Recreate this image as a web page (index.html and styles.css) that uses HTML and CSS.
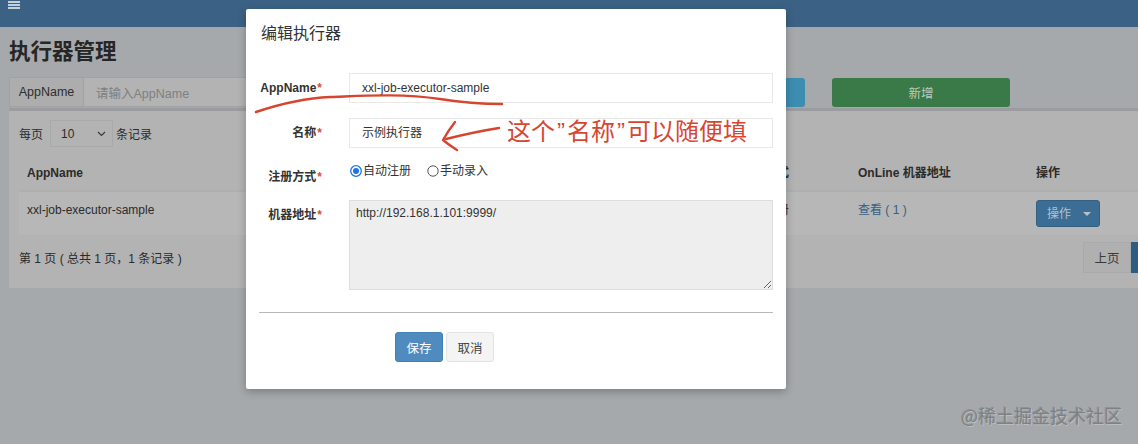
FILE: index.html
```html
<!DOCTYPE html>
<html lang="zh-CN">
<head>
<meta charset="utf-8">
<title>执行器管理</title>
<link rel="stylesheet" href="styles.css">
</head>
<body>
<header class="topbar">
  <span class="burger"><i></i><i></i><i></i></span>
</header>
<main class="content">
  <h1 class="page-title">执行器管理</h1>
  <div class="search-row">
    <div class="input-group">
      <span class="addon">AppName</span>
      <span class="search-input">请输入AppName</span>
    </div>
    <button class="btn btn-search">搜索</button>
    <button class="btn btn-add">新增</button>
  </div>
  <section class="box">
    <div class="length">
      <span>每页</span>
      <span class="select">10
        <svg class="chev" width="9" height="6" viewBox="0 0 9 6"><path d="M1 1l3.5 3.5L8 1" fill="none" stroke="#3a3a3a" stroke-width="1.2"/></svg>
      </span>
      <span>条记录</span>
    </div>
    <table class="grid">
      <colgroup>
        <col style="width:482px"><col style="width:120px"><col style="width:112px"><col style="width:117px"><col style="width:178px"><col style="width:151px">
      </colgroup>
      <thead>
        <tr><th>AppName</th><th>名称</th><th>排序</th><th>注册方式</th><th>OnLine 机器地址</th><th>操作</th></tr>
      </thead>
      <tbody>
        <tr>
          <td>xxl-job-executor-sample</td><td>示例执行器</td><td>1</td><td>自动注册</td>
          <td><a class="link">查看 ( 1 )</a></td>
          <td><span class="btn-op">操作<span class="caret"></span></span></td>
        </tr>
      </tbody>
    </table>
    <div class="footer-row">
      <span>第 1 页 ( 总共 1 页，1 条记录 )</span>
      <div class="pager"><span class="page">上页</span><span class="page active" aria-label="下页"></span></div>
    </div>
  </section>
</main>

<div class="modal">
  <div class="modal-header"><h4 class="modal-title">编辑执行器</h4></div>
  <div class="modal-body">
    <div class="form-row">
      <label class="form-label">AppName<span class="req">*</span></label>
      <div class="form-control">xxl-job-executor-sample</div>
    </div>
    <div class="form-row">
      <label class="form-label">名称<span class="req">*</span></label>
      <div class="form-control">示例执行器</div>
    </div>
    <div class="form-row">
      <label class="form-label lbl-radio">注册方式<span class="req">*</span></label>
      <div class="radios">
        <span class="radio"><svg width="12" height="12" viewBox="0 0 12 12"><circle cx="6" cy="6" r="5.3" fill="#fff" stroke="#1a73e8" stroke-width="1.3"/><circle cx="6" cy="6" r="3" fill="#1a73e8"/></svg>自动注册</span>
        <span class="radio"><svg width="12" height="12" viewBox="0 0 12 12"><circle cx="6" cy="6" r="5.2" fill="#fff" stroke="#555" stroke-width="1"/></svg>手动录入</span>
      </div>
    </div>
    <div class="form-row last">
      <label class="form-label">机器地址<span class="req">*</span></label>
      <textarea class="area" readonly>http://192.168.1.101:9999/</textarea>
    </div>
    <hr class="divider">
    <div class="actions">
      <button class="btn-save">保存</button>
      <button class="btn-cancel">取消</button>
    </div>
  </div>
</div>

<svg class="ink" width="1138" height="444" viewBox="0 0 1138 444">
  <path d="M256 112 C 280 104, 305 98, 330 97 C 360 96, 400 93, 440 99 C 465 103, 485 104, 502 104" fill="none" stroke="#d7452f" stroke-width="2.4" stroke-linecap="round"/>
  <path d="M499 128 C 480 131, 462 135, 446 139" fill="none" stroke="#d7452f" stroke-width="2.4" stroke-linecap="round"/>
  <path d="M455 122 Q 448 131, 443 140 Q 449 145, 457 150" fill="none" stroke="#d7452f" stroke-width="2.4" stroke-linecap="round" stroke-linejoin="round"/>
</svg>
<div class="note">这个<span class="q">”</span>名称<span class="q">”</span>可以随便填</div>
<div class="watermark">@稀土掘金技术社区</div>
</body>
</html>
```
FILE: styles.css
```css
* { box-sizing: border-box; margin: 0; padding: 0; }
html, body { width: 1138px; height: 444px; overflow: hidden; }
body {
  background: #a5a9ac;
  font-family: "Liberation Sans", "Noto Sans CJK SC", sans-serif;
  font-size: 12px;
  color: #2b2b2b;
  position: relative;
}

/* top bar */
.topbar { height: 27px; background: #3b6284; padding: 1px 0 0 8px; }
.burger { display: flex; flex-direction: column; gap: 1px; width: 12px; }
.burger i { display: block; height: 2px; background: #c3cfd9; }

/* page */
.content { padding-left: 9px; overflow: hidden; }
.page-title { font-size: 21.5px; font-weight: bold; line-height: 30px; margin: 10px 0; color: #262626; }

.search-row { display: flex; height: 30px; }
.input-group { display: flex; width: 560px; border: 1px solid #a2a2a2; }
.addon { width: 74px; background: #adadad; border-right: 1px solid #a2a2a2; display: flex; align-items: center; justify-content: center; color: #2e2e2e; font-size: 12.5px; }
.search-input { flex: 1; background: #b3b3b3; display: flex; align-items: center; padding-left: 12px; color: #808080; font-size: 12.5px; }
.btn { border: 0; border-radius: 3px; font: inherit; }
.btn-search { margin-left: 47px; width: 189px; background: #3d8db0; color: #b3c6cf; margin-top: 1px; }
.btn-add { margin-left: 27px; width: 178px; background: #397a48; color: #bccabf; margin-top: 1px; font-size: 12.5px; }

.box { margin-top: 1px; width: 1180px; background: #b3b3b3; border-top: 3px solid #9a9c9f; padding: 9px 10px 15px; }
.length { display: flex; align-items: center; height: 27px; }
.select { width: 63px; height: 27px; margin: 0 3px 0 7px; border: 1px solid #a9a9a9; display: flex; align-items: center; justify-content: space-between; padding: 0 6px 0 10px; }

.grid { margin-top: 9px; width: 1160px; border-collapse: collapse; table-layout: fixed; }
.grid th { text-align: left; font-weight: bold; padding: 7px 8px 7px; line-height: 20px; border-bottom: 2px solid #afafaf; white-space: nowrap; }
.grid td { padding: 8px; line-height: 20px; vertical-align: top; white-space: nowrap; }
.grid tbody tr { background: #b7b7b7; }
.link { color: #355f83; }
.btn-op { display: inline-flex; align-items: center; width: 64px; height: 27px; background: #3c6d94; border: 1px solid #35607f; border-radius: 3px; color: #b4c2cd; padding-left: 10px; }
.caret { margin-left: 12px; width: 0; height: 0; border-left: 4px solid transparent; border-right: 4px solid transparent; border-top: 4px solid #b4c2cd; }

.footer-row { margin-top: 7px; height: 31px; display: flex; align-items: center; justify-content: space-between; }
.pager { display: flex; }
.page { width: 48px; height: 31px; border: 1px solid #a9a9a9; background: #b0b0b0; display: flex; align-items: center; justify-content: center; color: #3a3a3a; font-size: 12.5px; }
.page.active { background: #2e5b82; border-color: #2e5b82; }

/* modal */
.modal { position: absolute; left: 246px; top: 9px; width: 540px; height: 380px; background: #fff; border-radius: 2px; box-shadow: 0 3px 9px rgba(0,0,0,.25); }
.modal-header { height: 50px; padding: 15px 15px 0; }
.modal-title { font-size: 16px; line-height: 20px; font-weight: normal; color: #333; }
.modal-body { padding: 14px 13px 0; }
.form-row { display: grid; grid-template-columns: 80px 424px; column-gap: 10px; margin-bottom: 15px; align-items: start; }
.form-row.last { margin-bottom: 0; }
.form-label { text-align: right; padding: 7px 17px 0 0; line-height: 16px; font-weight: bold; color: #333; white-space: nowrap; }
.form-label.lbl-radio { padding-top: 6px; }
.req { color: #dd4b39; margin-left: 1px; }
.form-control { height: 30px; border: 1px solid #e8e8e8; padding: 0 12px; line-height: 28px; color: #333; }
.radios { display: flex; gap: 16px; line-height: 16px; color: #333; margin-left: 1px; }
.radio { display: inline-flex; align-items: center; }
.radio svg { margin-right: 1px; }
.area { display: block; width: 424px; height: 90px; background: #eee; border: 1px solid #ddd; padding: 4px 6px; font: inherit; line-height: 16px; color: #333; outline: none; }
.divider { border: 0; border-top: 1px solid #b8b8b8; margin-top: 22px; height: 0; }
.actions { margin-top: 19px; padding-left: 136px; display: flex; gap: 3px; }
.btn-save, .btn-cancel { width: 48px; height: 30px; border-radius: 3px; font: inherit; font-size: 12.5px; }
.btn-save { background: #4f8bbf; border: 1px solid #4580b2; color: #fff; }
.btn-cancel { background: #f4f4f4; border: 1px solid #e3e3e3; color: #444; }

/* annotations */
.ink { position: absolute; left: 0; top: 0; pointer-events: none; }
.note { position: absolute; left: 507px; top: 113px; font-family: "Noto Sans CJK SC", sans-serif; font-size: 24px; line-height: 34px; color: #d84630; white-space: nowrap; }
.note .q { font-family: "Liberation Sans", sans-serif; margin: 0 2px; }
.watermark { position: absolute; left: 961px; top: 403px; font-family: "Noto Sans CJK SC", sans-serif; font-size: 18px; line-height: 24px; color: #7e8184; text-shadow: 1px 1px 0 rgba(255,255,255,.25), -1px -1px 0 rgba(0,0,0,.12); white-space: nowrap; }
```
